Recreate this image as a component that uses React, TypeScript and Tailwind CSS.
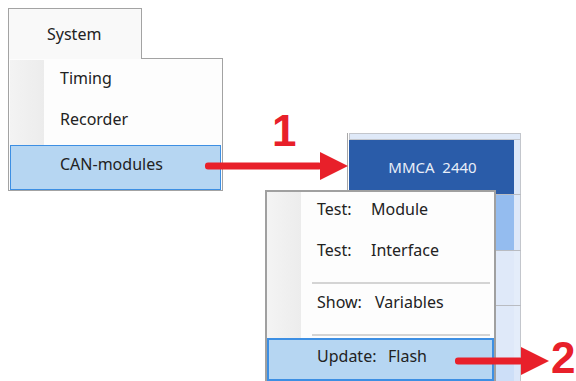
const font = { fontFamily: '"Noto Sans", "Open Sans", sans-serif' }

const Arrow = ({ x1, x2, y, base }: { x1: number; x2: number; y: number; base: number }) => (
  <svg className="absolute left-0 top-0" width={576} height={381} viewBox="0 0 576 381">
    <rect x={x1} y={y - 3.5} width={base - x1 + 2} height={7} rx={3} fill="#e8202a" />
    <polygon points={`${base},${y - 14} ${x2},${y} ${base},${y + 14}`} fill="#e8202a" />
  </svg>
)

const MenuRow = ({ label, value, w, h }: { label: string; value: string; w: string; h: string }) => (
  <div className={`flex items-center pl-[50px] ${h}`}>
    <span className={w}>{label}</span>
    <span>{value}</span>
  </div>
)

export default function App() {
  return (
    <div className="relative w-[576px] h-[381px] overflow-hidden bg-white text-[16px] text-[#222]" style={font}>
      {/* System menu */}
      <div className="absolute left-[8px] top-[8px] z-10 w-[134px] h-[51px] border border-b-0 border-[#a3a3a3] bg-[#f9f9f9] flex items-center pl-[38px] pb-[1px]">
        System
      </div>
      <div className="absolute left-[8px] top-[58px] w-[215px] h-[133px] border border-[#a3a3a3] bg-[#fdfdfd] flex flex-col pt-[1px] px-[1px]">
        <div className="flex h-[86px]">
          <div className="w-[34px] bg-gradient-to-r from-[#f3f3f3] to-[#ececec]" />
          <div className="flex flex-col pl-[16px]">
            <div className="h-[36px] flex items-center">Timing</div>
            <div className="h-[46px] flex items-center">Recorder</div>
          </div>
        </div>
        <div className="h-[45px] border border-[#3d8fe3] bg-[#b6d6f2] flex items-center pl-[49px] pb-[8px]">CAN-modules</div>
      </div>

      {/* module list */}
      <div className="absolute left-[347px] top-[133px] w-[174px] h-[260px] border-l border-[#a8a8a8] flex flex-col">
        <div className="h-[7px] bg-[#dfe9f8] border border-[#c3c6cc] ml-[1px]" />
        <div className="flex h-[55px] border-b border-[#b9bcc2] ml-[1px]">
          <div className="flex-1 bg-[#2a5ca9] flex items-center justify-center pl-[2px] text-[15px] text-[#e8eef8]">
            MMCA&nbsp;&nbsp;2440
          </div>
          <div className="w-[7px] bg-[#dde8f9] border-r border-[#c3c6cc]" />
        </div>
        <div className="flex h-[56px] border-b border-[#b9bcc2] ml-[1px]">
          <div className="flex-1 bg-[#94bcef]" />
          <div className="w-[7px] bg-[#dde8f9] border-r border-[#c3c6cc]" />
        </div>
        <div className="flex h-[55px] border-b border-[#b9bcc2] ml-[1px]">
          <div className="flex-1 bg-[#dfe9f9]" />
          <div className="w-[7px] bg-[#e4edfa] border-r border-[#c3c6cc]" />
        </div>
        <div className="flex h-[55px] border-b border-[#b9bcc2] ml-[1px]">
          <div className="flex-1 bg-[#dfe9f9]" />
          <div className="w-[7px] bg-[#e4edfa] border-r border-[#c3c6cc]" />
        </div>
        <div className="flex flex-1 ml-[1px]">
          <div className="flex-1 bg-[#cddff8]" />
          <div className="w-[7px] bg-[#dbe7f9] border-r border-[#c3c6cc]" />
        </div>
      </div>

      {/* context menu */}
      <div className="absolute left-[265px] top-[190px] w-[231px] h-[200px] border-2 border-[#a0a0a0] bg-[#fdfdfd] flex flex-col">
        <div className="relative flex flex-col pb-[2px]">
          <div className="absolute left-0 top-0 bottom-0 w-[34px] bg-gradient-to-r from-[#f4f4f4] to-[#ececec]" />
          <div className="relative flex flex-col">
            <MenuRow label="Test:" value="Module" w="w-[54px]" h="h-[34px]" />
            <MenuRow label="Test:" value="Interface" w="w-[54px]" h="h-[48px]" />
            <div className="h-[2px] bg-[#d4d4d4] ml-[45px] mr-[4px] my-[8px]" />
            <MenuRow label="Show:" value="Variables" w="w-[58px]" h="h-[20px]" />
            <div className="h-[2px] bg-[#d4d4d4] ml-[45px] mr-[4px] mt-[22px]" />
          </div>
        </div>
        <div className="h-[43px] border-2 border-[#3d8fe3] bg-[#b6d6f2] flex items-center pl-[48px] pb-[8px]">
          <span className="w-[71px]">Update:</span>
          <span>Flash</span>
        </div>
      </div>

      {/* annotations */}
      <Arrow x1={205} x2={348} base={320} y={166} />
      <Arrow x1={455} x2={549} base={521} y={361} />
      <div
        className="absolute left-[272px] top-[109px] text-[44px] leading-none font-bold text-[#e8202a]"
        style={{ fontFamily: '"Liberation Sans", Arial, sans-serif' }}
      >
        1
      </div>
      <div
        className="absolute left-[551px] top-[336px] text-[44px] leading-none font-bold text-[#e8202a]"
        style={{ fontFamily: '"Liberation Sans", Arial, sans-serif' }}
      >
        2
      </div>
    </div>
  )
}
